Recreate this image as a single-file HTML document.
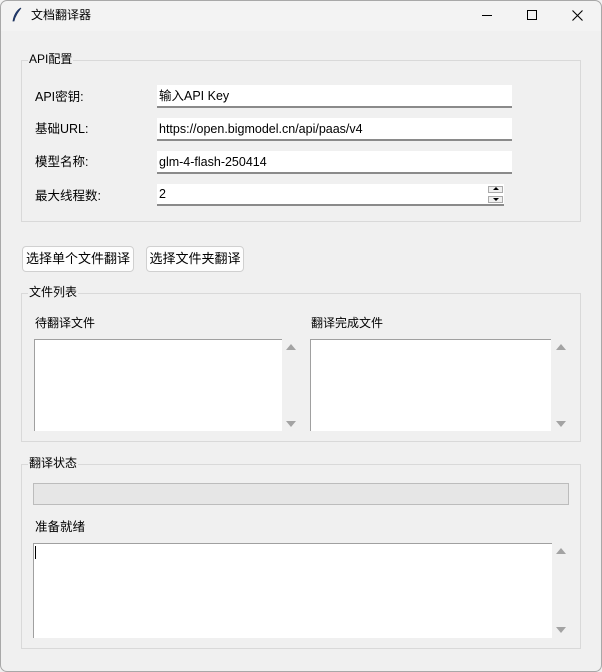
<!DOCTYPE html>
<html><head><meta charset="utf-8"><style>
*{margin:0;padding:0;box-sizing:border-box}
body{width:602px;height:672px;background:#f0f0f0;font-family:"Liberation Sans","Noto Sans CJK SC",sans-serif;font-size:12px;color:#000;position:relative;overflow:hidden}
.win{position:absolute;left:0;top:0;width:602px;height:672px;overflow:hidden;background:#f0f0f0}
.frame{position:absolute;left:0;top:0;width:602px;height:672px;border:1px solid #a8a8a8;border-radius:7px;pointer-events:none}
.title{position:absolute;left:0;top:0;width:602px;height:31px;background:#f3f3f3}
.a{position:absolute;white-space:nowrap;line-height:14px}
.grp{position:absolute;border:1px solid #d9d9d9}
.gl{position:absolute;background:#f0f0f0;padding:0 1px;line-height:14px}
.ent{position:absolute;background:#fff;border-bottom:2px solid #8a8a8a;padding-left:2px;padding-top:2px;line-height:19px;font-size:12.5px}
.btn{position:absolute;background:#fdfdfd;border:1px solid #d0d0d0;border-radius:4px;height:26px;line-height:24px;text-align:center;font-size:13px}
.lb{position:absolute;background:#fff;border-top:1px solid #a0a0a0;border-left:1px solid #a0a0a0}
.up,.dn{position:absolute;width:0;height:0;border-left:5px solid transparent;border-right:5px solid transparent}
.up{border-bottom:6px solid #a3a3a3}.dn{border-top:6px solid #a3a3a3}
</style></head><body><div class="win">
<div class="title"></div>
<svg style="position:absolute;left:11px;top:7px" width="12" height="16" viewBox="0 0 12 16"><path d="M10 1C6 3 3 8 2 14l1 0C4 9 7 5 10 1z" fill="#2b4a8a" stroke="#1a2f5a" stroke-width="0.8"/></svg>
<div class="a" style="left:31px;top:8px;font-size:12px">文档翻译器</div>
<div style="position:absolute;left:482px;top:15px;width:10px;height:1px;background:#000"></div>
<div style="position:absolute;left:527px;top:10px;width:10px;height:10px;border:1px solid #000"></div>
<svg style="position:absolute;left:572px;top:10px" width="11" height="11"><path d="M0.5 0.5L10.5 10.5M10.5 0.5L0.5 10.5" stroke="#000" stroke-width="1.1"/></svg>

<div class="grp" style="left:21px;top:60px;width:560px;height:162px"></div>
<div class="gl" style="left:28px;top:52px">API配置</div>
<div class="a" style="left:35px;top:90px;font-size:12.5px">API密钥:</div>
<div class="a" style="left:35px;top:122px;font-size:12.5px">基础URL:</div>
<div class="a" style="left:35px;top:155px;font-size:12.5px">模型名称:</div>
<div class="a" style="left:35px;top:189px;font-size:12.5px">最大线程数:</div>
<div class="ent" style="left:157px;top:85px;width:355px;height:23px">输入API Key</div>
<div class="ent" style="left:157px;top:118px;width:355px;height:23px">https://open.bigmodel.cn/api/paas/v4</div>
<div class="ent" style="left:157px;top:151px;width:355px;height:23px">glm-4-flash-250414</div>
<div class="ent" style="left:157px;top:184px;width:347px;height:22px;line-height:17px">2</div>
<div style="position:absolute;left:488px;top:186px;width:15px;height:7px;border:1px solid #aaa;background:#f0f0f0"></div>
<div style="position:absolute;left:488px;top:196px;width:15px;height:7px;border:1px solid #aaa;background:#f0f0f0"></div>
<div class="up" style="left:493px;top:187px;border-width:0 3px 3px 3px;border-bottom-color:#000"></div>
<div class="dn" style="left:493px;top:198px;border-width:3px 3px 0 3px;border-top-color:#000"></div>

<div class="btn" style="left:22px;top:246px;width:112px">选择单个文件翻译</div>
<div class="btn" style="left:146px;top:246px;width:98px">选择文件夹翻译</div>

<div class="grp" style="left:21px;top:293px;width:560px;height:149px"></div>
<div class="gl" style="left:28px;top:285px">文件列表</div>
<div class="a" style="left:35px;top:316px">待翻译文件</div>
<div class="a" style="left:311px;top:316px">翻译完成文件</div>
<div class="lb" style="left:34px;top:339px;width:248px;height:92px"></div>
<div class="up" style="left:286px;top:344px"></div><div class="dn" style="left:286px;top:421px"></div>
<div class="lb" style="left:310px;top:339px;width:241px;height:92px"></div>
<div class="up" style="left:556px;top:344px"></div><div class="dn" style="left:556px;top:421px"></div>

<div class="grp" style="left:21px;top:464px;width:560px;height:185px"></div>
<div class="gl" style="left:28px;top:456px">翻译状态</div>
<div style="position:absolute;left:33px;top:483px;width:536px;height:22px;background:#e6e6e6;border:1px solid #bcbcbc"></div>
<div class="a" style="left:35px;top:520px;font-size:12.5px">准备就绪</div>
<div class="lb" style="left:33px;top:543px;width:519px;height:95px"></div>
<div style="position:absolute;left:35px;top:546px;width:1px;height:13px;background:#000"></div>
<div class="up" style="left:556px;top:548px"></div><div class="dn" style="left:556px;top:627px"></div>
</div><div class="frame"></div></body></html>
